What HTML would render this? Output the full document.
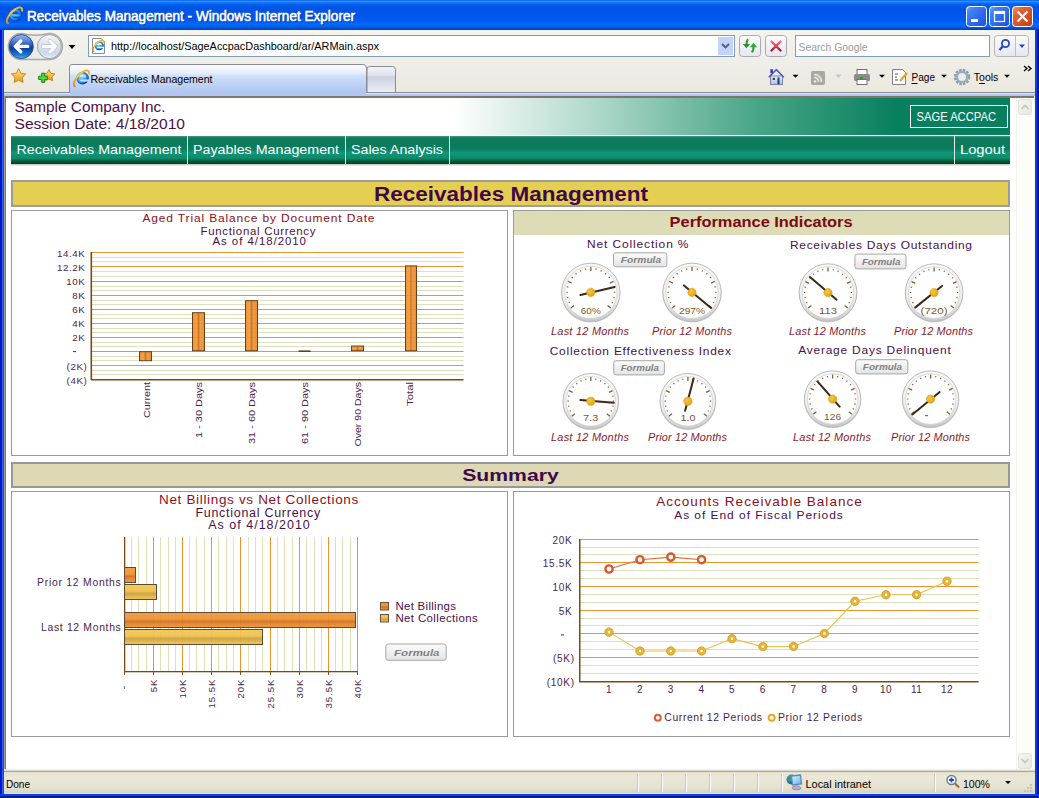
<!DOCTYPE html>
<html><head><meta charset="utf-8"><title>Receivables Management</title>
<style>
html,body{margin:0;padding:0;width:1039px;height:798px;overflow:hidden;background:#0a3ed6;}
svg{display:block;font-family:"Liberation Sans", sans-serif;}
</style></head><body>
<svg width="1039" height="798" viewBox="0 0 1039 798">
<defs>
<linearGradient id="gTitle" x1="0" y1="0" x2="0" y2="1">
 <stop offset="0" stop-color="#0058ee"/><stop offset="0.04" stop-color="#3593ff"/>
 <stop offset="0.08" stop-color="#127dff"/><stop offset="0.14" stop-color="#0262ee"/>
 <stop offset="0.24" stop-color="#0054e3"/><stop offset="0.56" stop-color="#0055eb"/>
 <stop offset="0.70" stop-color="#005bf5"/><stop offset="0.80" stop-color="#026afe"/>
 <stop offset="0.88" stop-color="#0062ef"/><stop offset="0.94" stop-color="#0052d6"/>
 <stop offset="1" stop-color="#0040ab"/>
</linearGradient>
<linearGradient id="gSideL" x1="0" y1="0" x2="1" y2="0">
 <stop offset="0" stop-color="#0030c8"/><stop offset="0.5" stop-color="#0a50e0"/><stop offset="1" stop-color="#1a66f0"/>
</linearGradient>
<linearGradient id="gSideR" x1="0" y1="0" x2="1" y2="0">
 <stop offset="0" stop-color="#1a60ee"/><stop offset="0.5" stop-color="#0446d8"/><stop offset="1" stop-color="#0026b0"/>
</linearGradient>
<linearGradient id="gTool" x1="0" y1="0" x2="0" y2="1">
 <stop offset="0" stop-color="#f4f3ee"/><stop offset="0.5" stop-color="#efeee8"/><stop offset="1" stop-color="#ebe9de"/>
</linearGradient>
<linearGradient id="gStatus" x1="0" y1="0" x2="0" y2="1">
 <stop offset="0" stop-color="#e4e1d0"/><stop offset="0.2" stop-color="#ebe8d8"/><stop offset="0.7" stop-color="#e6e2d0"/><stop offset="0.93" stop-color="#dcd5c2"/><stop offset="1" stop-color="#e8e7d8"/>
</linearGradient>

<radialGradient id="gIE" cx="0.45" cy="0.45" r="0.42">
 <stop offset="0" stop-color="#6ad0ff"/><stop offset="0.6" stop-color="#36a8f0"/><stop offset="0.85" stop-color="#1a78d8"/><stop offset="1" stop-color="#0c3a98"/>
</radialGradient>
<linearGradient id="gRing" x1="0" y1="0" x2="1" y2="0">
 <stop offset="0" stop-color="#e88a10"/><stop offset="0.5" stop-color="#ffd040"/><stop offset="1" stop-color="#f0b020"/>
</linearGradient>
<mask id="mIE" maskContentUnits="userSpaceOnUse">
 <rect x="-20" y="-20" width="40" height="40" fill="black"/>
 <circle cx="0" cy="0" r="6.3" fill="white"/>
 <path d="M-3.3 -0.9 Q-2.8 -3.9 0.2 -3.9 Q3.2 -3.9 3.7 -0.9 Z" fill="black"/>
 <path d="M-3.7 1.4 L8 1.4 L8 3.2 Q4 3.4 0.6 3.6 Q-2.6 3.6 -3.7 1.4 Z" fill="black"/>
</mask>

<linearGradient id="gBtnBlue" x1="0" y1="0" x2="1" y2="1">
 <stop offset="0" stop-color="#7aa8fc"/><stop offset="0.25" stop-color="#3c7ef8"/><stop offset="1" stop-color="#1a4fd8"/>
</linearGradient>
<linearGradient id="gBtnRed" x1="0" y1="0" x2="1" y2="1">
 <stop offset="0" stop-color="#f0a080"/><stop offset="0.25" stop-color="#e4643c"/><stop offset="1" stop-color="#c23c10"/>
</linearGradient>

<linearGradient id="gBack" x1="0" y1="0" x2="0" y2="1">
 <stop offset="0" stop-color="#8fb4ee"/><stop offset="0.45" stop-color="#2f67c8"/><stop offset="1" stop-color="#1c4aa8"/>
</linearGradient>
<linearGradient id="gFwd" x1="0" y1="0" x2="0" y2="1">
 <stop offset="0" stop-color="#f4f6fa"/><stop offset="0.5" stop-color="#d6dfee"/><stop offset="1" stop-color="#b8cae6"/>
</linearGradient>
<linearGradient id="gNavHolder" x1="0" y1="0" x2="0" y2="1">
 <stop offset="0" stop-color="#e4e4e0"/><stop offset="1" stop-color="#f2f2ee"/>
</linearGradient>
<linearGradient id="gSmallBtn" x1="0" y1="0" x2="0" y2="1">
 <stop offset="0" stop-color="#fbfbf8"/><stop offset="1" stop-color="#e2e1da"/>
</linearGradient>

<linearGradient id="gBack2" x1="0" y1="0" x2="0" y2="1">
 <stop offset="0" stop-color="#9cbcf0"/><stop offset="0.3" stop-color="#4a7ad0"/><stop offset="0.55" stop-color="#0c3c9c"/><stop offset="0.85" stop-color="#1a78d8"/><stop offset="1" stop-color="#5ab8f0"/>
</linearGradient>
<linearGradient id="gFwd2" x1="0" y1="0" x2="0" y2="1">
 <stop offset="0" stop-color="#f8f8fa"/><stop offset="0.5" stop-color="#d8dde8"/><stop offset="0.8" stop-color="#c8dcf0"/><stop offset="1" stop-color="#e8f4fc"/>
</linearGradient>

<linearGradient id="gTBtn" x1="0" y1="0" x2="0" y2="1">
 <stop offset="0" stop-color="#fbfbfd"/><stop offset="1" stop-color="#e6e6f0"/>
</linearGradient>
<linearGradient id="gStopX" x1="0" y1="40" x2="0" y2="52" gradientUnits="userSpaceOnUse">
 <stop offset="0" stop-color="#f27888"/><stop offset="0.5" stop-color="#e04058"/><stop offset="1" stop-color="#8a1020"/>
</linearGradient>

<linearGradient id="gStar" x1="0" y1="0" x2="0" y2="1">
 <stop offset="0" stop-color="#fde48a"/><stop offset="1" stop-color="#e89a10"/>
</linearGradient>
<linearGradient id="gTab" x1="0" y1="0" x2="0" y2="1">
 <stop offset="0" stop-color="#fdfdfe"/><stop offset="0.3" stop-color="#e6eefb"/><stop offset="0.4" stop-color="#cfdff8"/><stop offset="1" stop-color="#aec6f4"/>
</linearGradient>
<linearGradient id="gNewTab" x1="0" y1="0" x2="0" y2="1">
 <stop offset="0" stop-color="#f4f5fa"/><stop offset="0.35" stop-color="#e0e2ee"/><stop offset="0.4" stop-color="#ccd0e0"/><stop offset="1" stop-color="#eceef6"/>
</linearGradient>

<linearGradient id="gHouse" x1="0" y1="0" x2="0" y2="1">
 <stop offset="0" stop-color="#f4f6fa"/><stop offset="1" stop-color="#b4bccc"/>
</linearGradient>

<linearGradient id="gScrollBtn" x1="0" y1="0" x2="1" y2="1">
 <stop offset="0" stop-color="#f6f6f2"/><stop offset="1" stop-color="#e6e6e0"/>
</linearGradient>

<radialGradient id="gGlobe" cx="0.4" cy="0.35" r="0.7">
 <stop offset="0" stop-color="#7ad0f8"/><stop offset="0.5" stop-color="#2a7ad8"/><stop offset="1" stop-color="#1a4a9a"/>
</radialGradient>
<linearGradient id="gScreen" x1="0" y1="0" x2="1" y2="1">
 <stop offset="0" stop-color="#e0f4ff"/><stop offset="1" stop-color="#5ab0e8"/>
</linearGradient>

<linearGradient id="gHead" x1="0" y1="0" x2="1" y2="0">
 <stop offset="0" stop-color="#ffffff"/><stop offset="0.443" stop-color="#ffffff"/>
 <stop offset="0.60" stop-color="#a6d4c4"/><stop offset="0.75" stop-color="#46a486"/>
 <stop offset="0.885" stop-color="#08805e"/><stop offset="1" stop-color="#08805e"/>
</linearGradient>
<linearGradient id="gNav" x1="0" y1="0" x2="0" y2="1">
 <stop offset="0" stop-color="#4a9c86"/><stop offset="0.07" stop-color="#0e7a5a"/>
 <stop offset="0.45" stop-color="#0c7c5c"/><stop offset="0.6" stop-color="#12967a"/>
 <stop offset="0.8" stop-color="#0d8a68"/><stop offset="0.9" stop-color="#045a3c"/><stop offset="1" stop-color="#023e28"/>
</linearGradient>

<linearGradient id="gBarV" x1="0" y1="0" x2="1" y2="0">
 <stop offset="0" stop-color="#ee8c2c"/><stop offset="0.35" stop-color="#f39a3a"/>
 <stop offset="0.5" stop-color="#c86e1e"/><stop offset="0.65" stop-color="#f09636"/><stop offset="1" stop-color="#e5852a"/>
</linearGradient>
<linearGradient id="gBarB" x1="0" y1="0" x2="0" y2="1">
 <stop offset="0" stop-color="#f29a3a"/><stop offset="0.42" stop-color="#f09434"/>
 <stop offset="0.6" stop-color="#d07226"/><stop offset="0.78" stop-color="#e4862e"/><stop offset="1" stop-color="#f09434"/>
</linearGradient>
<linearGradient id="gBarC" x1="0" y1="0" x2="0" y2="1">
 <stop offset="0" stop-color="#f4c854"/><stop offset="0.42" stop-color="#f0c24c"/>
 <stop offset="0.62" stop-color="#c8a040"/><stop offset="0.8" stop-color="#e2b44a"/><stop offset="1" stop-color="#f0c24c"/>
</linearGradient>

<radialGradient id="gBezel" cx="0.5" cy="0.35" r="0.65">
 <stop offset="0" stop-color="#ffffff"/><stop offset="0.8" stop-color="#f4f4f4"/><stop offset="1" stop-color="#d4d4d4"/>
</radialGradient>
<linearGradient id="gBezelRing" x1="0" y1="0" x2="0" y2="1">
 <stop offset="0" stop-color="#f8f8f8"/><stop offset="0.6" stop-color="#eeeeee"/><stop offset="1" stop-color="#c8c8c8"/>
</linearGradient>
<linearGradient id="gFormula" x1="0" y1="0" x2="0" y2="1">
 <stop offset="0" stop-color="#fcfcfc"/><stop offset="1" stop-color="#e4e4e4"/>
</linearGradient>
<radialGradient id="gHub" cx="0.4" cy="0.4" r="0.6">
 <stop offset="0" stop-color="#f8c840"/><stop offset="1" stop-color="#e0a418"/>
</radialGradient>
</defs>
<rect x="0" y="0" width="1039" height="798" fill="#0a3ed6"/>
<rect x="0" y="0" width="1039" height="30" fill="url(#gTitle)"/>
<rect x="0" y="30" width="2" height="768" fill="#0214c8"/>
<rect x="2" y="30" width="1" height="768" fill="#2866f2"/>
<rect x="3" y="30" width="1" height="768" fill="#0a4ed8"/>
<rect x="1035" y="30" width="2" height="768" fill="#0442e4"/>
<rect x="1037" y="30" width="2" height="768" fill="#021888"/>
<rect x="0" y="794" width="1039" height="2" fill="#0442e4"/>
<rect x="0" y="796" width="1039" height="2" fill="#021a8c"/>
<rect x="4" y="30" width="1031" height="62" fill="url(#gTool)"/>
<rect x="4" y="92" width="1031" height="1" fill="#868b93"/>
<rect x="4" y="93" width="1031" height="1" fill="#dfe6f8"/>
<rect x="4" y="94" width="1031" height="2" fill="#b3c6f0"/>
<rect x="4" y="96" width="1031" height="2" fill="#7c776a"/>
<rect x="4" y="98" width="1031" height="673" fill="#ffffff"/>
<rect x="4" y="96" width="1" height="675" fill="#aaa494"/>
<rect x="5" y="96" width="1" height="674" fill="#7a7268"/>
<rect x="1034" y="96" width="1" height="675" fill="#f4f2ea"/>
<rect x="4" y="769" width="1031" height="1" fill="#f1f0e9"/>
<rect x="4" y="770" width="1031" height="1" fill="#dedcd0"/>
<rect x="4" y="771" width="1031" height="1" fill="#aaa796"/>
<rect x="4" y="772" width="1031" height="22" fill="url(#gStatus)"/>
<g transform="translate(14.5,15.5) scale(1.0)"><g transform="translate(1,-0.4)"><rect x="-8" y="-8" width="16" height="16" fill="url(#gIE)" mask="url(#mIE)"/></g><path d="M-10.10 0.60 L-10.19 0.19 L-10.19 -0.23 L-10.09 -0.64 L-9.90 -1.04 L-9.61 -1.44 L-9.24 -1.82 L-8.79 -2.18 L-8.25 -2.53 L-7.64 -2.85 L-6.96 -3.14 L-6.21 -3.41 L-5.41 -3.65 L-4.55 -3.85 L-3.66 -4.01 L-2.73 -4.14 L-1.77 -4.23 L-0.80 -4.29 L0.18 -4.30 L1.15 -4.27 L2.12 -4.21 L3.07 -4.10 L3.99 -3.96 L4.87 -3.78 L5.70 -3.56 L6.49 -3.32 L7.21 -3.04 L7.87 -2.74 L8.46 -2.40 L8.96 -2.05 L9.39 -1.68 L9.73 -1.29 L9.98 -0.89 L10.13 -0.49 L10.20 -0.08 L10.17 0.34 L10.05 0.75 L9.83 1.15 L9.52 1.54 L9.13 1.92 L8.65 2.28" transform="rotate(-47)" fill="none" stroke="url(#gRing)" stroke-width="1.9" stroke-linecap="round"/></g>
<text x="28" y="22" font-size="13.8" fill="#0a246a" stroke="#0a246a" stroke-width="0.5" textLength="328" lengthAdjust="spacingAndGlyphs" opacity="0.55">Receivables Management - Windows Internet Explorer</text>
<text x="27" y="21.2" font-size="13.8" fill="#ffffff" stroke="#ffffff" stroke-width="0.55" textLength="328" lengthAdjust="spacingAndGlyphs">Receivables Management - Windows Internet Explorer</text>
<rect x="966.5" y="6.5" width="20" height="20" rx="3" fill="url(#gBtnBlue)" stroke="#ffffff" stroke-width="1"/>
<rect x="971" y="19" width="7" height="3" fill="#ffffff"/>
<rect x="989.5" y="6.5" width="20" height="20" rx="3" fill="url(#gBtnBlue)" stroke="#ffffff" stroke-width="1"/>
<rect x="994.5" y="11.5" width="10" height="10" fill="none" stroke="#ffffff" stroke-width="1.2"/>
<rect x="994" y="11" width="11" height="3" fill="#ffffff"/>
<rect x="1012.5" y="6.5" width="20" height="20" rx="3" fill="url(#gBtnRed)" stroke="#ffffff" stroke-width="1"/>
<path d="M1017.5 11.5 L1027.5 21.5 M1027.5 11.5 L1017.5 21.5" stroke="#ffffff" stroke-width="2.2"/>
<path d="M21.3 33.5 Q35.3 37 49.4 33.5 A13 13 0 0 1 49.4 59.5 L21.3 59.5 A13 13 0 0 1 21.3 33.5 Z" fill="#ebebe8" stroke="#a8a8a8" stroke-width="1.3"/>
<circle cx="21.3" cy="46.6" r="12" fill="url(#gBack2)" stroke="#23428a" stroke-width="0.9"/>
<path d="M27.8 46.4 L15.8 46.4 M20.8 41 L15.2 46.4 L20.8 51.8" fill="none" stroke="#ffffff" stroke-width="3.4" stroke-linecap="round" stroke-linejoin="round"/>
<circle cx="49.4" cy="46.6" r="12" fill="url(#gFwd2)" stroke="#9a9a9a" stroke-width="0.9"/>
<path d="M43 46.4 L55 46.4 M50 41 L55.6 46.4 L50 51.8" fill="none" stroke="#c0c4cc" stroke-width="4.4" stroke-linecap="round" stroke-linejoin="round"/>
<path d="M43 46.4 L55 46.4 M50 41 L55.6 46.4 L50 51.8" fill="none" stroke="#ffffff" stroke-width="3" stroke-linecap="round" stroke-linejoin="round"/>
<path d="M68.5 45 L75.5 45 L72 49 Z" fill="#000000"/>
<rect x="88.5" y="35.5" width="646" height="21" fill="#ffffff" stroke="#7f9db9" stroke-width="1"/>
<rect x="718" y="37" width="15" height="18" fill="#c3d3fa"/>
<path d="M722 44 L725.5 47.5 L729 44" fill="none" stroke="#4d6185" stroke-width="1.8"/>
<path d="M92.5 38.5 L101.5 38.5 L104.5 41.5 L104.5 53.5 L92.5 53.5 Z" fill="#ffffff" stroke="#8c8c8c" stroke-width="1"/>
<g transform="translate(98.5,46) scale(0.72)"><g transform="translate(1,-0.4)"><rect x="-8" y="-8" width="16" height="16" fill="url(#gIE)" mask="url(#mIE)"/></g><path d="M-10.10 0.60 L-10.19 0.19 L-10.19 -0.23 L-10.09 -0.64 L-9.90 -1.04 L-9.61 -1.44 L-9.24 -1.82 L-8.79 -2.18 L-8.25 -2.53 L-7.64 -2.85 L-6.96 -3.14 L-6.21 -3.41 L-5.41 -3.65 L-4.55 -3.85 L-3.66 -4.01 L-2.73 -4.14 L-1.77 -4.23 L-0.80 -4.29 L0.18 -4.30 L1.15 -4.27 L2.12 -4.21 L3.07 -4.10 L3.99 -3.96 L4.87 -3.78 L5.70 -3.56 L6.49 -3.32 L7.21 -3.04 L7.87 -2.74 L8.46 -2.40 L8.96 -2.05 L9.39 -1.68 L9.73 -1.29 L9.98 -0.89 L10.13 -0.49 L10.20 -0.08 L10.17 0.34 L10.05 0.75 L9.83 1.15 L9.52 1.54 L9.13 1.92 L8.65 2.28" transform="rotate(-47)" fill="none" stroke="url(#gRing)" stroke-width="1.9" stroke-linecap="round"/></g>
<text x="111" y="50" font-size="11.5" fill="#000000" font-weight="normal" font-style="normal" text-anchor="start" textLength="268" lengthAdjust="spacingAndGlyphs" >http://localhost/SageAccpacDashboard/ar/ARMain.aspx</text>
<rect x="739.5" y="35.5" width="21" height="21" rx="3" fill="url(#gTBtn)" stroke="#ababab" stroke-width="1"/>
<path d="M748.2 39.2 Q746.3 40.8 746.6 44.5" fill="none" stroke="#2f9a2f" stroke-width="2"/>
<polygon points="742.8,44 750.2,44 746.4,48.2" fill="#2a902a"/>
<path d="M751.6 52.2 Q753.7 50.6 753.5 46.8" fill="none" stroke="#2f9a2f" stroke-width="2"/>
<polygon points="749.8,47.2 757.2,47.2 753.5,42.8" fill="#36a836"/>
<rect x="765.5" y="35.5" width="21" height="21" rx="3" fill="url(#gTBtn)" stroke="#ababab" stroke-width="1"/>
<path d="M771.5 41.5 L780.5 50.5 M780.5 41.5 L771.5 50.5" stroke="url(#gStopX)" stroke-width="2.4" stroke-linecap="round"/>
<rect x="795.5" y="35.5" width="194" height="21" fill="#ffffff" stroke="#7f9db9" stroke-width="1"/>
<text x="798.5" y="50.5" font-size="11.5" fill="#9c9c9c" font-weight="normal" font-style="normal" text-anchor="start" textLength="69" lengthAdjust="spacingAndGlyphs" >Search Google</text>
<rect x="994.5" y="35.5" width="34" height="21" rx="3" fill="url(#gTBtn)" stroke="#b4b4b4" stroke-width="1"/>
<rect x="1015" y="36" width="1" height="20" fill="#c0c0c0"/>
<circle cx="1005.5" cy="43.5" r="3.6" fill="none" stroke="#1f48c8" stroke-width="1.8"/>
<path d="M1003 46 L999.5 50" stroke="#1f48c8" stroke-width="2.2"/>
<path d="M1019 44.5 L1025 44.5 L1022 48 Z" fill="#1f48c8"/>
<polygon points="18.60,68.70 20.83,73.23 25.83,73.95 22.21,77.47 23.07,82.45 18.60,80.10 14.13,82.45 14.99,77.47 11.37,73.95 16.37,73.23" fill="url(#gStar)" stroke="#b87a08" stroke-width="0.8"/>
<polygon points="49.00,69.60 50.82,73.29 54.90,73.88 51.95,76.76 52.64,80.82 49.00,78.90 45.36,80.82 46.05,76.76 43.10,73.88 47.18,73.29" fill="url(#gStar)" stroke="#b87a08" stroke-width="0.8"/>
<path d="M38.6 76.2 h3 v-3 h3 v3 h3 v3.2 h-3 v3 h-3 v-3 h-3 z" fill="#5ad048" stroke="#1a8a18" stroke-width="1"/>
<path d="M69.5 93 L69.5 67 Q69.5 64.5 72 64.5 L363 64.5 Q366.5 64.5 366.5 68 L366.5 93" fill="url(#gTab)" stroke="#8b8c90" stroke-width="1"/>
<rect x="70" y="91" width="296" height="3" fill="#b0c6f2"/>
<g transform="translate(81.5,78.5) scale(1.0)"><g transform="translate(1,-0.4)"><rect x="-8" y="-8" width="16" height="16" fill="url(#gIE)" mask="url(#mIE)"/></g><path d="M-10.10 0.60 L-10.19 0.19 L-10.19 -0.23 L-10.09 -0.64 L-9.90 -1.04 L-9.61 -1.44 L-9.24 -1.82 L-8.79 -2.18 L-8.25 -2.53 L-7.64 -2.85 L-6.96 -3.14 L-6.21 -3.41 L-5.41 -3.65 L-4.55 -3.85 L-3.66 -4.01 L-2.73 -4.14 L-1.77 -4.23 L-0.80 -4.29 L0.18 -4.30 L1.15 -4.27 L2.12 -4.21 L3.07 -4.10 L3.99 -3.96 L4.87 -3.78 L5.70 -3.56 L6.49 -3.32 L7.21 -3.04 L7.87 -2.74 L8.46 -2.40 L8.96 -2.05 L9.39 -1.68 L9.73 -1.29 L9.98 -0.89 L10.13 -0.49 L10.20 -0.08 L10.17 0.34 L10.05 0.75 L9.83 1.15 L9.52 1.54 L9.13 1.92 L8.65 2.28" transform="rotate(-47)" fill="none" stroke="url(#gRing)" stroke-width="1.9" stroke-linecap="round"/></g>
<text x="90.5" y="83" font-size="11.5" fill="#000000" font-weight="normal" font-style="normal" text-anchor="start" textLength="122" lengthAdjust="spacingAndGlyphs" >Receivables Management</text>
<path d="M367 92 L367 69 Q367 66.5 369.5 66.5 L392.5 66.5 Q395.5 66.5 395.5 69.5 L395.5 92" fill="url(#gNewTab)" stroke="#8b8c90" stroke-width="1"/>
<rect x="770.3" y="69.2" width="2.6" height="4" fill="#2a3cc0"/>
<rect x="770.5" y="76" width="12" height="8.5" fill="url(#gHouse)" stroke="#7a86a4" stroke-width="1"/>
<path d="M768.8 77.2 L776.3 69.6 L783.8 77.2" fill="none" stroke="#4a58c0" stroke-width="1.5" stroke-linejoin="round"/>
<rect x="772.6" y="77.8" width="2.4" height="2.2" fill="#3a4468"/>
<rect x="777.4" y="77.4" width="2.2" height="6.8" fill="#1a46b4"/>
<path d="M792.5 74.8 L798.5 74.8 L795.5 77.8 Z" fill="#000"/>
<rect x="811" y="71" width="14" height="14" rx="2" fill="#a8a8a0"/>
<path d="M814 74.5 a7 7 0 0 1 7.5 7.5 M814 77.5 a4 4 0 0 1 4.5 4.5" fill="none" stroke="#e8e8e0" stroke-width="1.6"/>
<circle cx="815" cy="81.5" r="1.3" fill="#e8e8e0"/>
<path d="M835.5 74.8 L841.5 74.8 L838.5 77.8 Z" fill="#c4c4bc"/>
<rect x="857" y="69.5" width="10" height="5" fill="#ffffff" stroke="#707070" stroke-width="1"/>
<rect x="854" y="74" width="16" height="7" rx="1.5" fill="#8c8c8c"/>
<rect x="857" y="79.5" width="10" height="5" fill="#ffffff" stroke="#707070" stroke-width="1"/>
<rect x="860" y="77" width="3" height="2" fill="#20a020"/>
<path d="M879 74.8 L885 74.8 L882 77.8 Z" fill="#000"/>
<path d="M892.5 69.5 L902.5 69.5 L905.5 72.5 L905.5 84.5 L892.5 84.5 Z" fill="#ffffff" stroke="#808080" stroke-width="1"/>
<path d="M895 74 h3 M895 77 h2 M895 80 h3" stroke="#3050a0" stroke-width="1"/>
<path d="M900 81 L907 73" stroke="#e0a020" stroke-width="2"/>
<text x="911.5" y="81" font-size="11.5" fill="#000000" font-weight="normal" font-style="normal" text-anchor="start" textLength="23.5" lengthAdjust="spacingAndGlyphs" >Page</text>
<rect x="911.5" y="83" width="6" height="1" fill="#000"/>
<path d="M941 74.8 L947 74.8 L944 77.8 Z" fill="#000"/>
<circle cx="962" cy="77" r="6.5" fill="none" stroke="#8a9aaa" stroke-width="3.5" stroke-dasharray="2.2 1.2"/>
<circle cx="962" cy="77" r="5.2" fill="none" stroke="#9aabbc" stroke-width="2.5"/>
<circle cx="962" cy="77" r="2.6" fill="#e8edf2"/>
<text x="973.8" y="81" font-size="11.5" fill="#000000" font-weight="normal" font-style="normal" text-anchor="start" textLength="24.5" lengthAdjust="spacingAndGlyphs" >Tools</text>
<rect x="979" y="83" width="6" height="1" fill="#000"/>
<path d="M1004 74.8 L1010 74.8 L1007 77.8 Z" fill="#000"/>
<path d="M1024 66 L1027 68.5 L1024 71 M1028 66 L1031 68.5 L1028 71" fill="none" stroke="#000" stroke-width="1.3"/>
<rect x="1016" y="98" width="18" height="671" fill="#fcfcf8"/>
<rect x="1016" y="98" width="1" height="671" fill="#f4f3ec"/>
<rect x="1018.5" y="99.5" width="13" height="15" rx="2" fill="url(#gScrollBtn)" stroke="#e2e2da" stroke-width="1"/>
<path d="M1021.5 109 L1025 105.5 L1028.5 109" fill="none" stroke="#c4c4bc" stroke-width="1.6"/>
<rect x="1018.5" y="753.5" width="13" height="15" rx="2" fill="url(#gScrollBtn)" stroke="#e2e2da" stroke-width="1"/>
<path d="M1021.5 759 L1025 762.5 L1028.5 759" fill="none" stroke="#c4c4bc" stroke-width="1.6"/>
<text x="6" y="788" font-size="11.5" fill="#000000" font-weight="normal" font-style="normal" text-anchor="start" textLength="24" lengthAdjust="spacingAndGlyphs" >Done</text>
<rect x="637" y="773" width="1" height="19" fill="#cac7b6"/>
<rect x="638" y="773" width="1" height="19" fill="#ffffff"/>
<rect x="661" y="773" width="1" height="19" fill="#cac7b6"/>
<rect x="662" y="773" width="1" height="19" fill="#ffffff"/>
<rect x="685" y="773" width="1" height="19" fill="#cac7b6"/>
<rect x="686" y="773" width="1" height="19" fill="#ffffff"/>
<rect x="709" y="773" width="1" height="19" fill="#cac7b6"/>
<rect x="710" y="773" width="1" height="19" fill="#ffffff"/>
<rect x="733" y="773" width="1" height="19" fill="#cac7b6"/>
<rect x="734" y="773" width="1" height="19" fill="#ffffff"/>
<rect x="757" y="773" width="1" height="19" fill="#cac7b6"/>
<rect x="758" y="773" width="1" height="19" fill="#ffffff"/>
<rect x="781" y="773" width="1" height="19" fill="#cac7b6"/>
<rect x="782" y="773" width="1" height="19" fill="#ffffff"/>
<rect x="934" y="773" width="1" height="19" fill="#cac7b6"/>
<rect x="935" y="773" width="1" height="19" fill="#ffffff"/>
<circle cx="791.5" cy="779.5" r="5" fill="url(#gGlobe)"/>
<path d="M787.5 778 q2 -3 4 -1 q1 2 -1 3 q-2 2 -3 1z" fill="#3aa040"/>
<path d="M791.5 776 L800.5 775 L801.5 784 L792.5 785 Z" fill="url(#gScreen)" stroke="#5a8ab8" stroke-width="1.3"/>
<ellipse cx="796.5" cy="788" rx="4.5" ry="1.8" fill="#b8b0d0" stroke="#8a80a8" stroke-width="0.8"/>
<rect x="795" y="785" width="3" height="2" fill="#a8a0c0"/>
<text x="805.5" y="788" font-size="11.5" fill="#000000" font-weight="normal" font-style="normal" text-anchor="start" textLength="65.5" lengthAdjust="spacingAndGlyphs" >Local intranet</text>
<circle cx="951.5" cy="780" r="4.5" fill="#ffffff" stroke="#6a7a90" stroke-width="1.4"/>
<path d="M949 780 h5 M951.5 777.5 v5" stroke="#1a50c8" stroke-width="1.8"/>
<path d="M955 783.5 L959 787.5" stroke="#9a6a30" stroke-width="2"/>
<text x="963" y="788" font-size="11.5" fill="#000000" font-weight="normal" font-style="normal" text-anchor="start" textLength="27" lengthAdjust="spacingAndGlyphs" >100%</text>
<path d="M1005 781 L1011 781 L1008 784 Z" fill="#000"/>
<rect x="1030" y="784" width="2" height="2" fill="#c8c4b0"/>
<rect x="1030" y="787" width="2" height="2" fill="#c8c4b0"/>
<rect x="1030" y="790" width="2" height="2" fill="#c8c4b0"/>
<rect x="1027" y="787" width="2" height="2" fill="#c8c4b0"/>
<rect x="1027" y="790" width="2" height="2" fill="#c8c4b0"/>
<rect x="1024" y="790" width="2" height="2" fill="#c8c4b0"/>
<rect x="11" y="98" width="999" height="37" fill="url(#gHead)"/>
<text x="14.5" y="112" font-size="14" fill="#4a0f4a" font-weight="normal" font-style="normal" text-anchor="start" textLength="151" lengthAdjust="spacingAndGlyphs" >Sample Company Inc.</text>
<text x="14.5" y="128.5" font-size="14" fill="#4a0f4a" font-weight="normal" font-style="normal" text-anchor="start" textLength="170.5" lengthAdjust="spacingAndGlyphs" >Session Date: 4/18/2010</text>
<rect x="910.5" y="105.5" width="97" height="22" fill="none" stroke="#ffffff" stroke-width="1"/>
<text x="916.5" y="120.7" font-size="12" fill="#ffffff" font-weight="normal" font-style="normal" text-anchor="start" textLength="79.5" lengthAdjust="spacingAndGlyphs" >SAGE ACCPAC</text>
<rect x="11" y="136" width="999" height="28" fill="url(#gNav)"/>
<rect x="11" y="164" width="999" height="1" fill="#cfcac2"/>
<rect x="11" y="165" width="999" height="1" fill="#ebe8e4"/>
<rect x="187" y="136" width="1" height="28" fill="#dfe9e5"/>
<rect x="345" y="136" width="1" height="28" fill="#dfe9e5"/>
<rect x="449" y="136" width="1" height="28" fill="#dfe9e5"/>
<rect x="954" y="136" width="1" height="28" fill="#dfe9e5"/>
<text x="16.5" y="153.6" font-size="13" fill="#ffffff" font-weight="normal" font-style="normal" text-anchor="start" textLength="165" lengthAdjust="spacingAndGlyphs" >Receivables Management</text>
<text x="193" y="153.6" font-size="13" fill="#ffffff" font-weight="normal" font-style="normal" text-anchor="start" textLength="146" lengthAdjust="spacingAndGlyphs" >Payables Management</text>
<text x="351" y="153.6" font-size="13" fill="#ffffff" font-weight="normal" font-style="normal" text-anchor="start" textLength="92" lengthAdjust="spacingAndGlyphs" >Sales Analysis</text>
<text x="960" y="153.6" font-size="13" fill="#ffffff" font-weight="normal" font-style="normal" text-anchor="start" textLength="45" lengthAdjust="spacingAndGlyphs" >Logout</text>
<rect x="12" y="181" width="997" height="25" fill="#e5cf52" stroke="#a09d98" stroke-width="2"/>
<text x="374" y="201" font-size="19.5" fill="#40084a" font-weight="bold" font-style="normal" text-anchor="start" textLength="274" lengthAdjust="spacingAndGlyphs" >Receivables Management</text>
<rect x="11.5" y="210.5" width="496" height="245" fill="#ffffff" stroke="#9a9a9a" stroke-width="1"/>
<rect x="513.5" y="210.5" width="496" height="245" fill="#ffffff" stroke="#9a9a9a" stroke-width="1"/>
<rect x="514" y="211" width="495" height="24" fill="#dedcb6"/>
<text x="669.6" y="226.7" font-size="14" fill="#7a0a10" font-weight="bold" font-style="normal" text-anchor="start" textLength="183" lengthAdjust="spacingAndGlyphs" >Performance Indicators</text>
<rect x="12" y="463" width="997" height="24" fill="#dcd9b4" stroke="#9a9896" stroke-width="2"/>
<text x="462.2" y="481.3" font-size="17" fill="#40084a" font-weight="bold" font-style="normal" text-anchor="start" textLength="96.5" lengthAdjust="spacingAndGlyphs" >Summary</text>
<rect x="11.5" y="491.5" width="496" height="245" fill="#ffffff" stroke="#9a9a9a" stroke-width="1"/>
<rect x="513.5" y="491.5" width="496" height="245" fill="#ffffff" stroke="#9a9a9a" stroke-width="1"/>
<g transform="translate(142.5,0) scale(1.04,1)"><text x="0" y="221.7" font-size="11.5" fill="#8c1024" font-weight="normal" font-style="normal" text-anchor="start" textLength="223.08" lengthAdjust="spacing" >Aged Trial Balance by Document Date</text></g>
<g transform="translate(200.5,0) scale(1.04,1)"><text x="0" y="235" font-size="11" fill="#4a0f4a" font-weight="normal" font-style="normal" text-anchor="start" textLength="110.58" lengthAdjust="spacing" >Functional Currency</text></g>
<g transform="translate(212.5,0) scale(1.04,1)"><text x="0" y="245.5" font-size="11" fill="#4a0f4a" font-weight="normal" font-style="normal" text-anchor="start" textLength="89.90" lengthAdjust="spacing" >As of 4/18/2010</text></g>
<rect x="91" y="257" width="372.5" height="1" fill="#dde0bc"/>
<rect x="91" y="261" width="372.5" height="1" fill="#dde0bc"/>
<rect x="91" y="271" width="372.5" height="1" fill="#dde0bc"/>
<rect x="91" y="276" width="372.5" height="1" fill="#dde0bc"/>
<rect x="91" y="286" width="372.5" height="1" fill="#dde0bc"/>
<rect x="91" y="290" width="372.5" height="1" fill="#dde0bc"/>
<rect x="91" y="300" width="372.5" height="1" fill="#dde0bc"/>
<rect x="91" y="304" width="372.5" height="1" fill="#dde0bc"/>
<rect x="91" y="314" width="372.5" height="1" fill="#dde0bc"/>
<rect x="91" y="318" width="372.5" height="1" fill="#dde0bc"/>
<rect x="91" y="328" width="372.5" height="1" fill="#dde0bc"/>
<rect x="91" y="332" width="372.5" height="1" fill="#dde0bc"/>
<rect x="91" y="342" width="372.5" height="1" fill="#dde0bc"/>
<rect x="91" y="346" width="372.5" height="1" fill="#dde0bc"/>
<rect x="91" y="356" width="372.5" height="1" fill="#dde0bc"/>
<rect x="91" y="360" width="372.5" height="1" fill="#dde0bc"/>
<rect x="91" y="370" width="372.5" height="1" fill="#dde0bc"/>
<rect x="91" y="374" width="372.5" height="1" fill="#dde0bc"/>
<rect x="91" y="252" width="372.5" height="1" fill="#eb9530"/>
<rect x="91" y="266" width="372.5" height="1" fill="#eb9530"/>
<rect x="91" y="281" width="372.5" height="1" fill="#eb9530"/>
<rect x="91" y="295" width="372.5" height="1" fill="#eb9530"/>
<rect x="91" y="309" width="372.5" height="1" fill="#eb9530"/>
<rect x="91" y="323" width="372.5" height="1" fill="#eb9530"/>
<rect x="91" y="337" width="372.5" height="1" fill="#eb9530"/>
<rect x="91" y="351" width="372.5" height="1" fill="#eb9530"/>
<rect x="91" y="365" width="372.5" height="1" fill="#eb9530"/>
<rect x="91" y="379" width="372.5" height="1.5" fill="#7a4a14"/>
<rect x="90.5" y="252" width="1.6" height="128" fill="#7a4a14"/>
<text x="85.5" y="256.6" font-size="9.8" fill="#4c1e4c" text-anchor="end" letter-spacing="0.6">14.4K</text>
<text x="85.5" y="270.7" font-size="9.8" fill="#4c1e4c" text-anchor="end" letter-spacing="0.6">12.2K</text>
<text x="85.5" y="284.8" font-size="9.8" fill="#4c1e4c" text-anchor="end" letter-spacing="0.6">10K</text>
<text x="85.5" y="298.9" font-size="9.8" fill="#4c1e4c" text-anchor="end" letter-spacing="0.6">8K</text>
<text x="85.5" y="313.0" font-size="9.8" fill="#4c1e4c" text-anchor="end" letter-spacing="0.6">6K</text>
<text x="85.5" y="327.2" font-size="9.8" fill="#4c1e4c" text-anchor="end" letter-spacing="0.6">4K</text>
<text x="85.5" y="341.3" font-size="9.8" fill="#4c1e4c" text-anchor="end" letter-spacing="0.6">2K</text>
<rect x="73" y="351.1" width="3" height="1" fill="#4c1e4c"/>
<text x="87.5" y="369.5" font-size="9.8" fill="#4c1e4c" text-anchor="end" letter-spacing="0.6">(2K)</text>
<text x="87.5" y="383.6" font-size="9.8" fill="#4c1e4c" text-anchor="end" letter-spacing="0.6">(4K)</text>
<rect x="139.5" y="351.7" width="12" height="9.0" fill="url(#gBarV)" stroke="#6a4018" stroke-width="1" fill-opacity="0.93"/>
<rect x="192.5" y="312.7" width="12" height="38.0" fill="url(#gBarV)" stroke="#6a4018" stroke-width="1" fill-opacity="0.93"/>
<rect x="245.5" y="300.7" width="12" height="50.0" fill="url(#gBarV)" stroke="#6a4018" stroke-width="1" fill-opacity="0.93"/>
<rect x="299.1" y="350.9" width="11.0" height="0.6" fill="url(#gBarV)" stroke="#6a4018" stroke-width="1" fill-opacity="0.93"/>
<rect x="351.5" y="346.0" width="12" height="4.699999999999989" fill="url(#gBarV)" stroke="#6a4018" stroke-width="1" fill-opacity="0.93"/>
<rect x="405.5" y="265.9" width="11" height="84.80000000000001" fill="url(#gBarV)" stroke="#6a4018" stroke-width="1" fill-opacity="0.93"/>
<text x="149.8" y="382" font-size="9.4" fill="#4c1e4c" text-anchor="end" transform="rotate(-90 149.8 382)" textLength="36" lengthAdjust="spacingAndGlyphs">Current</text>
<text x="202.1" y="382" font-size="9.4" fill="#4c1e4c" text-anchor="end" transform="rotate(-90 202.1 382)" textLength="56" lengthAdjust="spacingAndGlyphs">1 - 30 Days</text>
<text x="254.5" y="382" font-size="9.4" fill="#4c1e4c" text-anchor="end" transform="rotate(-90 254.5 382)" textLength="62" lengthAdjust="spacingAndGlyphs">31 - 60 Days</text>
<text x="307.5" y="382" font-size="9.4" fill="#4c1e4c" text-anchor="end" transform="rotate(-90 307.5 382)" textLength="62" lengthAdjust="spacingAndGlyphs">61 - 90 Days</text>
<text x="360.7" y="382" font-size="9.4" fill="#4c1e4c" text-anchor="end" transform="rotate(-90 360.7 382)" textLength="64.5" lengthAdjust="spacingAndGlyphs">Over 90 Days</text>
<text x="413.1" y="382" font-size="9.4" fill="#4c1e4c" text-anchor="end" transform="rotate(-90 413.1 382)" textLength="24" lengthAdjust="spacingAndGlyphs">Total</text>
<g transform="translate(587,0) scale(1.04,1)"><text x="0" y="248" font-size="11.5" fill="#4a0f4a" font-weight="normal" font-style="normal" text-anchor="start" textLength="97.60" lengthAdjust="spacing" >Net Collection %</text></g>
<g transform="translate(790,0) scale(1.04,1)"><text x="0" y="249" font-size="11.5" fill="#4a0f4a" font-weight="normal" font-style="normal" text-anchor="start" textLength="175.00" lengthAdjust="spacing" >Receivables Days Outstanding</text></g>
<g transform="translate(549.7,0) scale(1.04,1)"><text x="0" y="355.2" font-size="11.5" fill="#4a0f4a" font-weight="normal" font-style="normal" text-anchor="start" textLength="174.33" lengthAdjust="spacing" >Collection Effectiveness Index</text></g>
<g transform="translate(798.2,0) scale(1.04,1)"><text x="0" y="354" font-size="11.5" fill="#4a0f4a" font-weight="normal" font-style="normal" text-anchor="start" textLength="146.73" lengthAdjust="spacing" >Average Days Delinquent</text></g>
<rect x="613.5" y="252.8" width="53.39999999999998" height="14.0" rx="2.5" fill="url(#gFormula)" stroke="#a6a6a6" stroke-width="1"/>
<text x="641.0" y="263.4" font-size="8.4" font-weight="bold" font-style="italic" fill="#828282" text-anchor="middle" textLength="40.3" lengthAdjust="spacingAndGlyphs">Formula</text>
<rect x="854.9" y="254.1" width="51.10000000000002" height="14.799999999999983" rx="2.5" fill="url(#gFormula)" stroke="#a6a6a6" stroke-width="1"/>
<text x="881.2" y="265.1" font-size="8.4" font-weight="bold" font-style="italic" fill="#828282" text-anchor="middle" textLength="38.6" lengthAdjust="spacingAndGlyphs">Formula</text>
<rect x="613.7" y="360.7" width="50.69999999999993" height="14.199999999999989" rx="2.5" fill="url(#gFormula)" stroke="#a6a6a6" stroke-width="1"/>
<text x="639.8" y="371.4" font-size="8.4" font-weight="bold" font-style="italic" fill="#828282" text-anchor="middle" textLength="38.3" lengthAdjust="spacingAndGlyphs">Formula</text>
<rect x="855.7" y="359.7" width="52.09999999999991" height="14.199999999999989" rx="2.5" fill="url(#gFormula)" stroke="#a6a6a6" stroke-width="1"/>
<text x="882.5" y="370.4" font-size="8.4" font-weight="bold" font-style="italic" fill="#828282" text-anchor="middle" textLength="39.3" lengthAdjust="spacingAndGlyphs">Formula</text>
<circle cx="590.8" cy="293.0" r="29.599999999999998" fill="#d6d6d6"/>
<circle cx="590.8" cy="292.4" r="29.2" fill="url(#gBezelRing)" stroke="#b4b4b4" stroke-width="0.9"/>
<circle cx="590.8" cy="292.4" r="26.2" fill="#fefefe" stroke="#d2d2d2" stroke-width="0.8"/>
<line x1="574.00" y1="305.52" x2="570.78" y2="308.04" stroke="#8a5c28" stroke-width="1.3"/>
<line x1="569.93" y1="302.22" x2="568.61" y2="302.84" stroke="#8a5c28" stroke-width="1.1"/>
<line x1="568.27" y1="297.35" x2="566.84" y2="297.67" stroke="#8a5c28" stroke-width="1.1"/>
<line x1="567.73" y1="292.24" x2="566.27" y2="292.23" stroke="#8a5c28" stroke-width="1.1"/>
<line x1="568.34" y1="287.13" x2="566.92" y2="286.80" stroke="#8a5c28" stroke-width="1.1"/>
<line x1="571.64" y1="283.06" x2="567.97" y2="281.26" stroke="#8a5c28" stroke-width="1.3"/>
<line x1="572.82" y1="277.95" x2="571.68" y2="277.03" stroke="#8a5c28" stroke-width="1.1"/>
<line x1="576.47" y1="274.32" x2="575.56" y2="273.18" stroke="#8a5c28" stroke-width="1.1"/>
<line x1="580.83" y1="271.60" x2="580.20" y2="270.28" stroke="#8a5c28" stroke-width="1.1"/>
<line x1="585.69" y1="269.91" x2="585.37" y2="268.48" stroke="#8a5c28" stroke-width="1.1"/>
<line x1="590.80" y1="271.08" x2="590.80" y2="267.00" stroke="#8a5c28" stroke-width="1.3"/>
<line x1="595.91" y1="269.91" x2="596.23" y2="268.48" stroke="#8a5c28" stroke-width="1.1"/>
<line x1="600.77" y1="271.60" x2="601.40" y2="270.28" stroke="#8a5c28" stroke-width="1.1"/>
<line x1="605.13" y1="274.32" x2="606.04" y2="273.18" stroke="#8a5c28" stroke-width="1.1"/>
<line x1="608.78" y1="277.95" x2="609.92" y2="277.03" stroke="#8a5c28" stroke-width="1.1"/>
<line x1="609.96" y1="283.06" x2="613.63" y2="281.26" stroke="#8a5c28" stroke-width="1.3"/>
<line x1="613.26" y1="287.13" x2="614.68" y2="286.80" stroke="#8a5c28" stroke-width="1.1"/>
<line x1="613.87" y1="292.24" x2="615.33" y2="292.23" stroke="#8a5c28" stroke-width="1.1"/>
<line x1="613.33" y1="297.35" x2="614.76" y2="297.67" stroke="#8a5c28" stroke-width="1.1"/>
<line x1="611.67" y1="302.22" x2="612.99" y2="302.84" stroke="#8a5c28" stroke-width="1.1"/>
<line x1="607.60" y1="305.52" x2="610.82" y2="308.04" stroke="#8a5c28" stroke-width="1.3"/>
<text x="590.8" y="313.7" font-size="9.5" fill="#7c5a30" text-anchor="middle" textLength="20" lengthAdjust="spacingAndGlyphs">60%</text>
<line x1="580.4" y1="295" x2="614.7" y2="287" stroke="#3c2814" stroke-width="2" stroke-linecap="round"/>
<circle cx="590.8" cy="292.4" r="4.2" fill="url(#gHub)" stroke="#d89a18" stroke-width="0.5"/>
<circle cx="692" cy="293.0" r="29.599999999999998" fill="#d6d6d6"/>
<circle cx="692" cy="292.4" r="29.2" fill="url(#gBezelRing)" stroke="#b4b4b4" stroke-width="0.9"/>
<circle cx="692" cy="292.4" r="26.2" fill="#fefefe" stroke="#d2d2d2" stroke-width="0.8"/>
<line x1="675.20" y1="305.52" x2="671.98" y2="308.04" stroke="#8a5c28" stroke-width="1.3"/>
<line x1="671.13" y1="302.22" x2="669.81" y2="302.84" stroke="#8a5c28" stroke-width="1.1"/>
<line x1="669.47" y1="297.35" x2="668.04" y2="297.67" stroke="#8a5c28" stroke-width="1.1"/>
<line x1="668.93" y1="292.24" x2="667.47" y2="292.23" stroke="#8a5c28" stroke-width="1.1"/>
<line x1="669.54" y1="287.13" x2="668.12" y2="286.80" stroke="#8a5c28" stroke-width="1.1"/>
<line x1="672.84" y1="283.06" x2="669.17" y2="281.26" stroke="#8a5c28" stroke-width="1.3"/>
<line x1="674.02" y1="277.95" x2="672.88" y2="277.03" stroke="#8a5c28" stroke-width="1.1"/>
<line x1="677.67" y1="274.32" x2="676.76" y2="273.18" stroke="#8a5c28" stroke-width="1.1"/>
<line x1="682.03" y1="271.60" x2="681.40" y2="270.28" stroke="#8a5c28" stroke-width="1.1"/>
<line x1="686.89" y1="269.91" x2="686.57" y2="268.48" stroke="#8a5c28" stroke-width="1.1"/>
<line x1="692.00" y1="271.08" x2="692.00" y2="267.00" stroke="#8a5c28" stroke-width="1.3"/>
<line x1="697.11" y1="269.91" x2="697.43" y2="268.48" stroke="#8a5c28" stroke-width="1.1"/>
<line x1="701.97" y1="271.60" x2="702.60" y2="270.28" stroke="#8a5c28" stroke-width="1.1"/>
<line x1="706.33" y1="274.32" x2="707.24" y2="273.18" stroke="#8a5c28" stroke-width="1.1"/>
<line x1="709.98" y1="277.95" x2="711.12" y2="277.03" stroke="#8a5c28" stroke-width="1.1"/>
<line x1="711.16" y1="283.06" x2="714.83" y2="281.26" stroke="#8a5c28" stroke-width="1.3"/>
<line x1="714.46" y1="287.13" x2="715.88" y2="286.80" stroke="#8a5c28" stroke-width="1.1"/>
<line x1="715.07" y1="292.24" x2="716.53" y2="292.23" stroke="#8a5c28" stroke-width="1.1"/>
<line x1="714.53" y1="297.35" x2="715.96" y2="297.67" stroke="#8a5c28" stroke-width="1.1"/>
<line x1="712.87" y1="302.22" x2="714.19" y2="302.84" stroke="#8a5c28" stroke-width="1.1"/>
<line x1="708.80" y1="305.52" x2="712.02" y2="308.04" stroke="#8a5c28" stroke-width="1.3"/>
<text x="692" y="313.7" font-size="9.5" fill="#7c5a30" text-anchor="middle" textLength="26" lengthAdjust="spacingAndGlyphs">297%</text>
<line x1="684" y1="285.4" x2="711" y2="308" stroke="#3c2814" stroke-width="2" stroke-linecap="round"/>
<circle cx="692" cy="292.4" r="4.2" fill="url(#gHub)" stroke="#d89a18" stroke-width="0.5"/>
<circle cx="828" cy="293.20000000000005" r="29.2" fill="#d6d6d6"/>
<circle cx="828" cy="292.6" r="28.8" fill="url(#gBezelRing)" stroke="#b4b4b4" stroke-width="0.9"/>
<circle cx="828" cy="292.6" r="25.8" fill="#fefefe" stroke="#d2d2d2" stroke-width="0.8"/>
<line x1="811.43" y1="305.54" x2="808.26" y2="308.03" stroke="#8a5c28" stroke-width="1.3"/>
<line x1="807.41" y1="302.29" x2="806.11" y2="302.90" stroke="#8a5c28" stroke-width="1.1"/>
<line x1="805.78" y1="297.49" x2="804.37" y2="297.79" stroke="#8a5c28" stroke-width="1.1"/>
<line x1="805.25" y1="292.44" x2="803.81" y2="292.43" stroke="#8a5c28" stroke-width="1.1"/>
<line x1="805.85" y1="287.40" x2="804.45" y2="287.08" stroke="#8a5c28" stroke-width="1.1"/>
<line x1="809.10" y1="283.38" x2="805.48" y2="281.62" stroke="#8a5c28" stroke-width="1.3"/>
<line x1="810.27" y1="278.34" x2="809.15" y2="277.44" stroke="#8a5c28" stroke-width="1.1"/>
<line x1="813.87" y1="274.77" x2="812.97" y2="273.64" stroke="#8a5c28" stroke-width="1.1"/>
<line x1="818.17" y1="272.08" x2="817.55" y2="270.78" stroke="#8a5c28" stroke-width="1.1"/>
<line x1="822.96" y1="270.41" x2="822.64" y2="269.01" stroke="#8a5c28" stroke-width="1.1"/>
<line x1="828.00" y1="271.58" x2="828.00" y2="267.54" stroke="#8a5c28" stroke-width="1.3"/>
<line x1="833.04" y1="270.41" x2="833.36" y2="269.01" stroke="#8a5c28" stroke-width="1.1"/>
<line x1="837.83" y1="272.08" x2="838.45" y2="270.78" stroke="#8a5c28" stroke-width="1.1"/>
<line x1="842.13" y1="274.77" x2="843.03" y2="273.64" stroke="#8a5c28" stroke-width="1.1"/>
<line x1="845.73" y1="278.34" x2="846.85" y2="277.44" stroke="#8a5c28" stroke-width="1.1"/>
<line x1="846.90" y1="283.38" x2="850.52" y2="281.62" stroke="#8a5c28" stroke-width="1.3"/>
<line x1="850.15" y1="287.40" x2="851.55" y2="287.08" stroke="#8a5c28" stroke-width="1.1"/>
<line x1="850.75" y1="292.44" x2="852.19" y2="292.43" stroke="#8a5c28" stroke-width="1.1"/>
<line x1="850.22" y1="297.49" x2="851.63" y2="297.79" stroke="#8a5c28" stroke-width="1.1"/>
<line x1="848.59" y1="302.29" x2="849.89" y2="302.90" stroke="#8a5c28" stroke-width="1.1"/>
<line x1="844.57" y1="305.54" x2="847.74" y2="308.03" stroke="#8a5c28" stroke-width="1.3"/>
<text x="828" y="313.8" font-size="9.5" fill="#7c5a30" text-anchor="middle" textLength="18" lengthAdjust="spacingAndGlyphs">113</text>
<line x1="836.6" y1="299.7" x2="810" y2="277" stroke="#3c2814" stroke-width="2" stroke-linecap="round"/>
<circle cx="828" cy="292.6" r="4.2" fill="url(#gHub)" stroke="#d89a18" stroke-width="0.5"/>
<circle cx="934.1" cy="293.20000000000005" r="29.2" fill="#d6d6d6"/>
<circle cx="934.1" cy="292.6" r="28.8" fill="url(#gBezelRing)" stroke="#b4b4b4" stroke-width="0.9"/>
<circle cx="934.1" cy="292.6" r="25.8" fill="#fefefe" stroke="#d2d2d2" stroke-width="0.8"/>
<line x1="917.53" y1="305.54" x2="914.36" y2="308.03" stroke="#8a5c28" stroke-width="1.3"/>
<line x1="913.51" y1="302.29" x2="912.21" y2="302.90" stroke="#8a5c28" stroke-width="1.1"/>
<line x1="911.88" y1="297.49" x2="910.47" y2="297.79" stroke="#8a5c28" stroke-width="1.1"/>
<line x1="911.35" y1="292.44" x2="909.91" y2="292.43" stroke="#8a5c28" stroke-width="1.1"/>
<line x1="911.95" y1="287.40" x2="910.55" y2="287.08" stroke="#8a5c28" stroke-width="1.1"/>
<line x1="915.20" y1="283.38" x2="911.58" y2="281.62" stroke="#8a5c28" stroke-width="1.3"/>
<line x1="916.37" y1="278.34" x2="915.25" y2="277.44" stroke="#8a5c28" stroke-width="1.1"/>
<line x1="919.97" y1="274.77" x2="919.07" y2="273.64" stroke="#8a5c28" stroke-width="1.1"/>
<line x1="924.27" y1="272.08" x2="923.65" y2="270.78" stroke="#8a5c28" stroke-width="1.1"/>
<line x1="929.06" y1="270.41" x2="928.74" y2="269.01" stroke="#8a5c28" stroke-width="1.1"/>
<line x1="934.10" y1="271.58" x2="934.10" y2="267.54" stroke="#8a5c28" stroke-width="1.3"/>
<line x1="939.14" y1="270.41" x2="939.46" y2="269.01" stroke="#8a5c28" stroke-width="1.1"/>
<line x1="943.93" y1="272.08" x2="944.55" y2="270.78" stroke="#8a5c28" stroke-width="1.1"/>
<line x1="948.23" y1="274.77" x2="949.13" y2="273.64" stroke="#8a5c28" stroke-width="1.1"/>
<line x1="951.83" y1="278.34" x2="952.95" y2="277.44" stroke="#8a5c28" stroke-width="1.1"/>
<line x1="953.00" y1="283.38" x2="956.62" y2="281.62" stroke="#8a5c28" stroke-width="1.3"/>
<line x1="956.25" y1="287.40" x2="957.65" y2="287.08" stroke="#8a5c28" stroke-width="1.1"/>
<line x1="956.85" y1="292.44" x2="958.29" y2="292.43" stroke="#8a5c28" stroke-width="1.1"/>
<line x1="956.32" y1="297.49" x2="957.73" y2="297.79" stroke="#8a5c28" stroke-width="1.1"/>
<line x1="954.69" y1="302.29" x2="955.99" y2="302.90" stroke="#8a5c28" stroke-width="1.1"/>
<line x1="950.67" y1="305.54" x2="953.84" y2="308.03" stroke="#8a5c28" stroke-width="1.3"/>
<text x="934.1" y="314" font-size="9.5" fill="#7c5a30" text-anchor="middle" textLength="27" lengthAdjust="spacingAndGlyphs">(720)</text>
<line x1="942" y1="286" x2="915.4" y2="307.4" stroke="#3c2814" stroke-width="2" stroke-linecap="round"/>
<circle cx="934.1" cy="292.6" r="4.2" fill="url(#gHub)" stroke="#d89a18" stroke-width="0.5"/>
<circle cx="590.8" cy="401.90000000000003" r="28.2" fill="#d6d6d6"/>
<circle cx="590.8" cy="401.3" r="27.8" fill="url(#gBezelRing)" stroke="#b4b4b4" stroke-width="0.9"/>
<circle cx="590.8" cy="401.3" r="24.8" fill="#fefefe" stroke="#d2d2d2" stroke-width="0.8"/>
<line x1="574.81" y1="413.79" x2="571.74" y2="416.19" stroke="#8a5c28" stroke-width="1.3"/>
<line x1="570.93" y1="410.65" x2="569.67" y2="411.24" stroke="#8a5c28" stroke-width="1.1"/>
<line x1="569.35" y1="406.02" x2="567.99" y2="406.31" stroke="#8a5c28" stroke-width="1.1"/>
<line x1="568.84" y1="401.15" x2="567.45" y2="401.14" stroke="#8a5c28" stroke-width="1.1"/>
<line x1="569.42" y1="396.28" x2="568.06" y2="395.97" stroke="#8a5c28" stroke-width="1.1"/>
<line x1="572.56" y1="392.40" x2="569.06" y2="390.70" stroke="#8a5c28" stroke-width="1.3"/>
<line x1="573.68" y1="387.54" x2="572.60" y2="386.67" stroke="#8a5c28" stroke-width="1.1"/>
<line x1="577.16" y1="384.09" x2="576.29" y2="383.00" stroke="#8a5c28" stroke-width="1.1"/>
<line x1="581.31" y1="381.49" x2="580.71" y2="380.24" stroke="#8a5c28" stroke-width="1.1"/>
<line x1="585.93" y1="379.88" x2="585.63" y2="378.53" stroke="#8a5c28" stroke-width="1.1"/>
<line x1="590.80" y1="381.01" x2="590.80" y2="377.11" stroke="#8a5c28" stroke-width="1.3"/>
<line x1="595.67" y1="379.88" x2="595.97" y2="378.53" stroke="#8a5c28" stroke-width="1.1"/>
<line x1="600.29" y1="381.49" x2="600.89" y2="380.24" stroke="#8a5c28" stroke-width="1.1"/>
<line x1="604.44" y1="384.09" x2="605.31" y2="383.00" stroke="#8a5c28" stroke-width="1.1"/>
<line x1="607.92" y1="387.54" x2="609.00" y2="386.67" stroke="#8a5c28" stroke-width="1.1"/>
<line x1="609.04" y1="392.40" x2="612.54" y2="390.70" stroke="#8a5c28" stroke-width="1.3"/>
<line x1="612.18" y1="396.28" x2="613.54" y2="395.97" stroke="#8a5c28" stroke-width="1.1"/>
<line x1="612.76" y1="401.15" x2="614.15" y2="401.14" stroke="#8a5c28" stroke-width="1.1"/>
<line x1="612.25" y1="406.02" x2="613.61" y2="406.31" stroke="#8a5c28" stroke-width="1.1"/>
<line x1="610.67" y1="410.65" x2="611.93" y2="411.24" stroke="#8a5c28" stroke-width="1.1"/>
<line x1="606.79" y1="413.79" x2="609.86" y2="416.19" stroke="#8a5c28" stroke-width="1.3"/>
<text x="590.8" y="420.8" font-size="9.5" fill="#7c5a30" text-anchor="middle" textLength="15" lengthAdjust="spacingAndGlyphs">7.3</text>
<line x1="580.4" y1="400" x2="613.8" y2="402.7" stroke="#3c2814" stroke-width="2" stroke-linecap="round"/>
<circle cx="590.8" cy="401.3" r="4.2" fill="url(#gHub)" stroke="#d89a18" stroke-width="0.5"/>
<circle cx="687.9" cy="401.90000000000003" r="28.2" fill="#d6d6d6"/>
<circle cx="687.9" cy="401.3" r="27.8" fill="url(#gBezelRing)" stroke="#b4b4b4" stroke-width="0.9"/>
<circle cx="687.9" cy="401.3" r="24.8" fill="#fefefe" stroke="#d2d2d2" stroke-width="0.8"/>
<line x1="671.91" y1="413.79" x2="668.84" y2="416.19" stroke="#8a5c28" stroke-width="1.3"/>
<line x1="668.03" y1="410.65" x2="666.77" y2="411.24" stroke="#8a5c28" stroke-width="1.1"/>
<line x1="666.45" y1="406.02" x2="665.09" y2="406.31" stroke="#8a5c28" stroke-width="1.1"/>
<line x1="665.94" y1="401.15" x2="664.55" y2="401.14" stroke="#8a5c28" stroke-width="1.1"/>
<line x1="666.52" y1="396.28" x2="665.16" y2="395.97" stroke="#8a5c28" stroke-width="1.1"/>
<line x1="669.66" y1="392.40" x2="666.16" y2="390.70" stroke="#8a5c28" stroke-width="1.3"/>
<line x1="670.78" y1="387.54" x2="669.70" y2="386.67" stroke="#8a5c28" stroke-width="1.1"/>
<line x1="674.26" y1="384.09" x2="673.39" y2="383.00" stroke="#8a5c28" stroke-width="1.1"/>
<line x1="678.41" y1="381.49" x2="677.81" y2="380.24" stroke="#8a5c28" stroke-width="1.1"/>
<line x1="683.03" y1="379.88" x2="682.73" y2="378.53" stroke="#8a5c28" stroke-width="1.1"/>
<line x1="687.90" y1="381.01" x2="687.90" y2="377.11" stroke="#8a5c28" stroke-width="1.3"/>
<line x1="692.77" y1="379.88" x2="693.07" y2="378.53" stroke="#8a5c28" stroke-width="1.1"/>
<line x1="697.39" y1="381.49" x2="697.99" y2="380.24" stroke="#8a5c28" stroke-width="1.1"/>
<line x1="701.54" y1="384.09" x2="702.41" y2="383.00" stroke="#8a5c28" stroke-width="1.1"/>
<line x1="705.02" y1="387.54" x2="706.10" y2="386.67" stroke="#8a5c28" stroke-width="1.1"/>
<line x1="706.14" y1="392.40" x2="709.64" y2="390.70" stroke="#8a5c28" stroke-width="1.3"/>
<line x1="709.28" y1="396.28" x2="710.64" y2="395.97" stroke="#8a5c28" stroke-width="1.1"/>
<line x1="709.86" y1="401.15" x2="711.25" y2="401.14" stroke="#8a5c28" stroke-width="1.1"/>
<line x1="709.35" y1="406.02" x2="710.71" y2="406.31" stroke="#8a5c28" stroke-width="1.1"/>
<line x1="707.77" y1="410.65" x2="709.03" y2="411.24" stroke="#8a5c28" stroke-width="1.1"/>
<line x1="703.89" y1="413.79" x2="706.96" y2="416.19" stroke="#8a5c28" stroke-width="1.3"/>
<text x="687.9" y="420.8" font-size="9.5" fill="#7c5a30" text-anchor="middle" textLength="15" lengthAdjust="spacingAndGlyphs">1.0</text>
<line x1="685.1" y1="410.7" x2="693.6" y2="378.4" stroke="#3c2814" stroke-width="2" stroke-linecap="round"/>
<circle cx="687.9" cy="401.3" r="4.2" fill="url(#gHub)" stroke="#d89a18" stroke-width="0.5"/>
<circle cx="832.6" cy="399.70000000000005" r="28.599999999999998" fill="#d6d6d6"/>
<circle cx="832.6" cy="399.1" r="28.2" fill="url(#gBezelRing)" stroke="#b4b4b4" stroke-width="0.9"/>
<circle cx="832.6" cy="399.1" r="25.2" fill="#fefefe" stroke="#d2d2d2" stroke-width="0.8"/>
<line x1="816.38" y1="411.77" x2="813.27" y2="414.20" stroke="#8a5c28" stroke-width="1.3"/>
<line x1="812.44" y1="408.59" x2="811.17" y2="409.19" stroke="#8a5c28" stroke-width="1.1"/>
<line x1="810.84" y1="403.88" x2="809.46" y2="404.19" stroke="#8a5c28" stroke-width="1.1"/>
<line x1="810.32" y1="398.94" x2="808.91" y2="398.93" stroke="#8a5c28" stroke-width="1.1"/>
<line x1="810.91" y1="394.01" x2="809.54" y2="393.69" stroke="#8a5c28" stroke-width="1.1"/>
<line x1="814.10" y1="390.08" x2="810.55" y2="388.35" stroke="#8a5c28" stroke-width="1.3"/>
<line x1="815.24" y1="385.14" x2="814.14" y2="384.26" stroke="#8a5c28" stroke-width="1.1"/>
<line x1="818.76" y1="381.64" x2="817.89" y2="380.54" stroke="#8a5c28" stroke-width="1.1"/>
<line x1="822.97" y1="379.01" x2="822.36" y2="377.74" stroke="#8a5c28" stroke-width="1.1"/>
<line x1="827.66" y1="377.38" x2="827.35" y2="376.00" stroke="#8a5c28" stroke-width="1.1"/>
<line x1="832.60" y1="378.51" x2="832.60" y2="374.57" stroke="#8a5c28" stroke-width="1.3"/>
<line x1="837.54" y1="377.38" x2="837.85" y2="376.00" stroke="#8a5c28" stroke-width="1.1"/>
<line x1="842.23" y1="379.01" x2="842.84" y2="377.74" stroke="#8a5c28" stroke-width="1.1"/>
<line x1="846.44" y1="381.64" x2="847.31" y2="380.54" stroke="#8a5c28" stroke-width="1.1"/>
<line x1="849.96" y1="385.14" x2="851.06" y2="384.26" stroke="#8a5c28" stroke-width="1.1"/>
<line x1="851.10" y1="390.08" x2="854.65" y2="388.35" stroke="#8a5c28" stroke-width="1.3"/>
<line x1="854.29" y1="394.01" x2="855.66" y2="393.69" stroke="#8a5c28" stroke-width="1.1"/>
<line x1="854.88" y1="398.94" x2="856.29" y2="398.93" stroke="#8a5c28" stroke-width="1.1"/>
<line x1="854.36" y1="403.88" x2="855.74" y2="404.19" stroke="#8a5c28" stroke-width="1.1"/>
<line x1="852.76" y1="408.59" x2="854.03" y2="409.19" stroke="#8a5c28" stroke-width="1.1"/>
<line x1="848.82" y1="411.77" x2="851.93" y2="414.20" stroke="#8a5c28" stroke-width="1.3"/>
<text x="832.6" y="419.8" font-size="9.5" fill="#7c5a30" text-anchor="middle" textLength="17" lengthAdjust="spacingAndGlyphs">126</text>
<line x1="839.6" y1="406.7" x2="817.4" y2="381.4" stroke="#3c2814" stroke-width="2" stroke-linecap="round"/>
<circle cx="832.6" cy="399.1" r="4.2" fill="url(#gHub)" stroke="#d89a18" stroke-width="0.5"/>
<circle cx="930.6" cy="399.70000000000005" r="28.599999999999998" fill="#d6d6d6"/>
<circle cx="930.6" cy="399.1" r="28.2" fill="url(#gBezelRing)" stroke="#b4b4b4" stroke-width="0.9"/>
<circle cx="930.6" cy="399.1" r="25.2" fill="#fefefe" stroke="#d2d2d2" stroke-width="0.8"/>
<line x1="914.38" y1="411.77" x2="911.27" y2="414.20" stroke="#8a5c28" stroke-width="1.3"/>
<line x1="910.44" y1="408.59" x2="909.17" y2="409.19" stroke="#8a5c28" stroke-width="1.1"/>
<line x1="908.84" y1="403.88" x2="907.46" y2="404.19" stroke="#8a5c28" stroke-width="1.1"/>
<line x1="908.32" y1="398.94" x2="906.91" y2="398.93" stroke="#8a5c28" stroke-width="1.1"/>
<line x1="908.91" y1="394.01" x2="907.54" y2="393.69" stroke="#8a5c28" stroke-width="1.1"/>
<line x1="912.10" y1="390.08" x2="908.55" y2="388.35" stroke="#8a5c28" stroke-width="1.3"/>
<line x1="913.24" y1="385.14" x2="912.14" y2="384.26" stroke="#8a5c28" stroke-width="1.1"/>
<line x1="916.76" y1="381.64" x2="915.89" y2="380.54" stroke="#8a5c28" stroke-width="1.1"/>
<line x1="920.97" y1="379.01" x2="920.36" y2="377.74" stroke="#8a5c28" stroke-width="1.1"/>
<line x1="925.66" y1="377.38" x2="925.35" y2="376.00" stroke="#8a5c28" stroke-width="1.1"/>
<line x1="930.60" y1="378.51" x2="930.60" y2="374.57" stroke="#8a5c28" stroke-width="1.3"/>
<line x1="935.54" y1="377.38" x2="935.85" y2="376.00" stroke="#8a5c28" stroke-width="1.1"/>
<line x1="940.23" y1="379.01" x2="940.84" y2="377.74" stroke="#8a5c28" stroke-width="1.1"/>
<line x1="944.44" y1="381.64" x2="945.31" y2="380.54" stroke="#8a5c28" stroke-width="1.1"/>
<line x1="947.96" y1="385.14" x2="949.06" y2="384.26" stroke="#8a5c28" stroke-width="1.1"/>
<line x1="949.10" y1="390.08" x2="952.65" y2="388.35" stroke="#8a5c28" stroke-width="1.3"/>
<line x1="952.29" y1="394.01" x2="953.66" y2="393.69" stroke="#8a5c28" stroke-width="1.1"/>
<line x1="952.88" y1="398.94" x2="954.29" y2="398.93" stroke="#8a5c28" stroke-width="1.1"/>
<line x1="952.36" y1="403.88" x2="953.74" y2="404.19" stroke="#8a5c28" stroke-width="1.1"/>
<line x1="950.76" y1="408.59" x2="952.03" y2="409.19" stroke="#8a5c28" stroke-width="1.1"/>
<line x1="946.82" y1="411.77" x2="949.93" y2="414.20" stroke="#8a5c28" stroke-width="1.3"/>
<line x1="939.7" y1="392.1" x2="912.4" y2="414.4" stroke="#3c2814" stroke-width="2" stroke-linecap="round"/>
<circle cx="930.6" cy="399.1" r="4.2" fill="url(#gHub)" stroke="#d89a18" stroke-width="0.5"/>
<rect x="925" y="415" width="3" height="1.2" fill="#8c6a3e"/>
<g transform="translate(551,0) scale(1.04,1)"><text x="0" y="335" font-size="10.5" fill="#8a1a2e" font-weight="normal" font-style="italic" text-anchor="start" textLength="75.00" lengthAdjust="spacing" >Last 12 Months</text></g>
<g transform="translate(652,0) scale(1.04,1)"><text x="0" y="335" font-size="10.5" fill="#8a1a2e" font-weight="normal" font-style="italic" text-anchor="start" textLength="76.92" lengthAdjust="spacing" >Prior 12 Months</text></g>
<g transform="translate(789,0) scale(1.04,1)"><text x="0" y="335" font-size="10.5" fill="#8a1a2e" font-weight="normal" font-style="italic" text-anchor="start" textLength="74.04" lengthAdjust="spacing" >Last 12 Months</text></g>
<g transform="translate(894,0) scale(1.04,1)"><text x="0" y="335" font-size="10.5" fill="#8a1a2e" font-weight="normal" font-style="italic" text-anchor="start" textLength="75.96" lengthAdjust="spacing" >Prior 12 Months</text></g>
<g transform="translate(551,0) scale(1.04,1)"><text x="0" y="441.5" font-size="10.5" fill="#8a1a2e" font-weight="normal" font-style="italic" text-anchor="start" textLength="75.00" lengthAdjust="spacing" >Last 12 Months</text></g>
<g transform="translate(648,0) scale(1.04,1)"><text x="0" y="441.5" font-size="10.5" fill="#8a1a2e" font-weight="normal" font-style="italic" text-anchor="start" textLength="75.96" lengthAdjust="spacing" >Prior 12 Months</text></g>
<g transform="translate(793,0) scale(1.04,1)"><text x="0" y="441" font-size="10.5" fill="#8a1a2e" font-weight="normal" font-style="italic" text-anchor="start" textLength="75.00" lengthAdjust="spacing" >Last 12 Months</text></g>
<g transform="translate(891,0) scale(1.04,1)"><text x="0" y="441" font-size="10.5" fill="#8a1a2e" font-weight="normal" font-style="italic" text-anchor="start" textLength="75.96" lengthAdjust="spacing" >Prior 12 Months</text></g>
<g transform="translate(159,0) scale(1.04,1)"><text x="0" y="503.9" font-size="13" fill="#8c1024" font-weight="normal" font-style="normal" text-anchor="start" textLength="191.63" lengthAdjust="spacing" >Net Billings vs Net Collections</text></g>
<g transform="translate(195.4,0) scale(1.04,1)"><text x="0" y="517" font-size="12" fill="#4a0f4a" font-weight="normal" font-style="normal" text-anchor="start" textLength="120.00" lengthAdjust="spacing" >Functional Currency</text></g>
<g transform="translate(208.3,0) scale(1.04,1)"><text x="0" y="529.2" font-size="12" fill="#4a0f4a" font-weight="normal" font-style="normal" text-anchor="start" textLength="97.60" lengthAdjust="spacing" >As of 4/18/2010</text></g>
<rect x="131" y="537" width="1" height="135" fill="#dfe0b4"/>
<rect x="138" y="537" width="1" height="135" fill="#dfe0b4"/>
<rect x="146" y="537" width="1" height="135" fill="#dfe0b4"/>
<rect x="160" y="537" width="1" height="135" fill="#dfe0b4"/>
<rect x="168" y="537" width="1" height="135" fill="#dfe0b4"/>
<rect x="175" y="537" width="1" height="135" fill="#dfe0b4"/>
<rect x="189" y="537" width="1" height="135" fill="#dfe0b4"/>
<rect x="196" y="537" width="1" height="135" fill="#dfe0b4"/>
<rect x="204" y="537" width="1" height="135" fill="#dfe0b4"/>
<rect x="218" y="537" width="1" height="135" fill="#dfe0b4"/>
<rect x="226" y="537" width="1" height="135" fill="#dfe0b4"/>
<rect x="233" y="537" width="1" height="135" fill="#dfe0b4"/>
<rect x="248" y="537" width="1" height="135" fill="#dfe0b4"/>
<rect x="255" y="537" width="1" height="135" fill="#dfe0b4"/>
<rect x="262" y="537" width="1" height="135" fill="#dfe0b4"/>
<rect x="277" y="537" width="1" height="135" fill="#dfe0b4"/>
<rect x="284" y="537" width="1" height="135" fill="#dfe0b4"/>
<rect x="292" y="537" width="1" height="135" fill="#dfe0b4"/>
<rect x="306" y="537" width="1" height="135" fill="#dfe0b4"/>
<rect x="314" y="537" width="1" height="135" fill="#dfe0b4"/>
<rect x="321" y="537" width="1" height="135" fill="#dfe0b4"/>
<rect x="335" y="537" width="1" height="135" fill="#dfe0b4"/>
<rect x="342" y="537" width="1" height="135" fill="#dfe0b4"/>
<rect x="350" y="537" width="1" height="135" fill="#dfe0b4"/>
<rect x="153" y="537" width="1" height="135" fill="#eb9530"/>
<rect x="182" y="537" width="1" height="135" fill="#eb9530"/>
<rect x="211" y="537" width="1" height="135" fill="#eb9530"/>
<rect x="240" y="537" width="1" height="135" fill="#eb9530"/>
<rect x="270" y="537" width="1" height="135" fill="#eb9530"/>
<rect x="299" y="537" width="1" height="135" fill="#eb9530"/>
<rect x="328" y="537" width="1" height="135" fill="#eb9530"/>
<rect x="357" y="537" width="1" height="135" fill="#eb9530"/>
<rect x="124" y="537" width="1.3" height="135" fill="#7a4a14"/>
<rect x="124" y="671" width="234" height="1.3" fill="#7a4a14"/>
<rect x="124" y="671" width="1" height="4" fill="#7a4a14"/>
<rect x="153" y="671" width="1" height="4" fill="#7a4a14"/>
<rect x="182" y="671" width="1" height="4" fill="#7a4a14"/>
<rect x="211" y="671" width="1" height="4" fill="#7a4a14"/>
<rect x="240" y="671" width="1" height="4" fill="#7a4a14"/>
<rect x="270" y="671" width="1" height="4" fill="#7a4a14"/>
<rect x="299" y="671" width="1" height="4" fill="#7a4a14"/>
<rect x="328" y="671" width="1" height="4" fill="#7a4a14"/>
<rect x="357" y="671" width="1" height="4" fill="#7a4a14"/>
<rect x="124.5" y="567.5" width="11" height="15" fill="url(#gBarB)" fill-opacity="0.95" stroke="#5e4a38" stroke-width="1"/>
<rect x="124.5" y="584.5" width="32" height="15" fill="url(#gBarC)" fill-opacity="0.95" stroke="#5e4a38" stroke-width="1"/>
<rect x="124.5" y="612.5" width="231" height="15" fill="url(#gBarB)" fill-opacity="0.95" stroke="#5e4a38" stroke-width="1"/>
<rect x="124.5" y="629.5" width="138" height="15" fill="url(#gBarC)" fill-opacity="0.95" stroke="#5e4a38" stroke-width="1"/>
<g transform="translate(37,0) scale(1.04,1)"><text x="0" y="586" font-size="10" fill="#4c1e4c" font-weight="normal" font-style="normal" text-anchor="start" textLength="80.58" lengthAdjust="spacing" >Prior 12 Months</text></g>
<g transform="translate(41,0) scale(1.04,1)"><text x="0" y="630.8" font-size="10" fill="#4c1e4c" font-weight="normal" font-style="normal" text-anchor="start" textLength="76.73" lengthAdjust="spacing" >Last 12 Months</text></g>
<rect x="124" y="686" width="1" height="3" fill="#8a7a8a"/>
<text x="157.0" y="678.5" font-size="9.6" fill="#4c1e4c" text-anchor="end" letter-spacing="1" transform="rotate(-90 157.0 678.5)">5K</text>
<text x="186.0" y="678.5" font-size="9.6" fill="#4c1e4c" text-anchor="end" letter-spacing="1" transform="rotate(-90 186.0 678.5)">10K</text>
<text x="215.0" y="678.5" font-size="9.6" fill="#4c1e4c" text-anchor="end" letter-spacing="1" transform="rotate(-90 215.0 678.5)">15.5K</text>
<text x="244.0" y="678.5" font-size="9.6" fill="#4c1e4c" text-anchor="end" letter-spacing="1" transform="rotate(-90 244.0 678.5)">20K</text>
<text x="274.0" y="678.5" font-size="9.6" fill="#4c1e4c" text-anchor="end" letter-spacing="1" transform="rotate(-90 274.0 678.5)">25.5K</text>
<text x="303.0" y="678.5" font-size="9.6" fill="#4c1e4c" text-anchor="end" letter-spacing="1" transform="rotate(-90 303.0 678.5)">30K</text>
<text x="332.0" y="678.5" font-size="9.6" fill="#4c1e4c" text-anchor="end" letter-spacing="1" transform="rotate(-90 332.0 678.5)">35.5K</text>
<text x="361.0" y="678.5" font-size="9.6" fill="#4c1e4c" text-anchor="end" letter-spacing="1" transform="rotate(-90 361.0 678.5)">40K</text>
<rect x="380.5" y="602.5" width="8" height="7.5" fill="url(#gBarB)" stroke="#6a5440" stroke-width="1"/>
<rect x="380.5" y="614.5" width="8" height="7.5" fill="url(#gBarC)" stroke="#6a5440" stroke-width="1"/>
<g transform="translate(395.4,0) scale(1.04,1)"><text x="0" y="610.3" font-size="11" fill="#4a0f4a" font-weight="normal" font-style="normal" text-anchor="start" textLength="58.27" lengthAdjust="spacing" >Net Billings</text></g>
<g transform="translate(395.4,0) scale(1.04,1)"><text x="0" y="622.5" font-size="11" fill="#4a0f4a" font-weight="normal" font-style="normal" text-anchor="start" textLength="79.23" lengthAdjust="spacing" >Net Collections</text></g>
<rect x="385.8" y="644.0" width="60.39999999999998" height="16.299999999999955" rx="2.5" fill="url(#gFormula)" stroke="#a6a6a6" stroke-width="1"/>
<text x="416.8" y="655.8" font-size="8.4" font-weight="bold" font-style="italic" fill="#828282" text-anchor="middle" textLength="45.4" lengthAdjust="spacingAndGlyphs">Formula</text>
<g transform="translate(656.2,0) scale(1.04,1)"><text x="0" y="506.2" font-size="13" fill="#8c1024" font-weight="normal" font-style="normal" text-anchor="start" textLength="197.69" lengthAdjust="spacing" >Accounts Receivable Balance</text></g>
<g transform="translate(674.2,0) scale(1.04,1)"><text x="0" y="518.9" font-size="11.5" fill="#4a0f4a" font-weight="normal" font-style="normal" text-anchor="start" textLength="162.12" lengthAdjust="spacing" >As of End of Fiscal Periods</text></g>
<rect x="579.5" y="547" width="399.1" height="1" fill="#dde0bc"/>
<rect x="579.5" y="554" width="399.1" height="1" fill="#dde0bc"/>
<rect x="579.5" y="570" width="399.1" height="1" fill="#dde0bc"/>
<rect x="579.5" y="578" width="399.1" height="1" fill="#dde0bc"/>
<rect x="579.5" y="594" width="399.1" height="1" fill="#dde0bc"/>
<rect x="579.5" y="602" width="399.1" height="1" fill="#dde0bc"/>
<rect x="579.5" y="618" width="399.1" height="1" fill="#dde0bc"/>
<rect x="579.5" y="625" width="399.1" height="1" fill="#dde0bc"/>
<rect x="579.5" y="641" width="399.1" height="1" fill="#dde0bc"/>
<rect x="579.5" y="649" width="399.1" height="1" fill="#dde0bc"/>
<rect x="579.5" y="665" width="399.1" height="1" fill="#dde0bc"/>
<rect x="579.5" y="673" width="399.1" height="1" fill="#dde0bc"/>
<rect x="579.5" y="539" width="399.1" height="1" fill="#eb9530"/>
<rect x="579.5" y="562" width="399.1" height="1" fill="#eb9530"/>
<rect x="579.5" y="586" width="399.1" height="1" fill="#eb9530"/>
<rect x="579.5" y="610" width="399.1" height="1" fill="#eb9530"/>
<rect x="579.5" y="633" width="399.1" height="1" fill="#eb9530"/>
<rect x="579.5" y="657" width="399.1" height="1" fill="#eb9530"/>
<rect x="579" y="681" width="399.6" height="1.5" fill="#7a4a14"/>
<rect x="579" y="539" width="1.5" height="143" fill="#7a4a14"/>
<text x="572.5" y="543.5" font-size="10" fill="#4c1e4c" text-anchor="end" letter-spacing="0.7">20K</text>
<text x="572.5" y="567.2" font-size="10" fill="#4c1e4c" text-anchor="end" letter-spacing="0.7">15.5K</text>
<text x="572.5" y="590.9" font-size="10" fill="#4c1e4c" text-anchor="end" letter-spacing="0.7">10K</text>
<text x="572.5" y="614.5" font-size="10" fill="#4c1e4c" text-anchor="end" letter-spacing="0.7">5K</text>
<rect x="561" y="634.4" width="3" height="1" fill="#4c1e4c"/>
<text x="574.7" y="661.9" font-size="10" fill="#4c1e4c" text-anchor="end" letter-spacing="0.7">(5K)</text>
<text x="574.7" y="685.6" font-size="10" fill="#4c1e4c" text-anchor="end" letter-spacing="0.7">(10K)</text>
<text x="609" y="693" font-size="10" fill="#4c1e4c" text-anchor="middle" letter-spacing="0.5">1</text>
<text x="640" y="693" font-size="10" fill="#4c1e4c" text-anchor="middle" letter-spacing="0.5">2</text>
<text x="670.8" y="693" font-size="10" fill="#4c1e4c" text-anchor="middle" letter-spacing="0.5">3</text>
<text x="701.6" y="693" font-size="10" fill="#4c1e4c" text-anchor="middle" letter-spacing="0.5">4</text>
<text x="732" y="693" font-size="10" fill="#4c1e4c" text-anchor="middle" letter-spacing="0.5">5</text>
<text x="762.9" y="693" font-size="10" fill="#4c1e4c" text-anchor="middle" letter-spacing="0.5">6</text>
<text x="793.6" y="693" font-size="10" fill="#4c1e4c" text-anchor="middle" letter-spacing="0.5">7</text>
<text x="824.3" y="693" font-size="10" fill="#4c1e4c" text-anchor="middle" letter-spacing="0.5">8</text>
<text x="855" y="693" font-size="10" fill="#4c1e4c" text-anchor="middle" letter-spacing="0.5">9</text>
<text x="886" y="693" font-size="10" fill="#4c1e4c" text-anchor="middle" letter-spacing="0.5">10</text>
<text x="916.6" y="693" font-size="10" fill="#4c1e4c" text-anchor="middle" letter-spacing="0.5">11</text>
<text x="947" y="693" font-size="10" fill="#4c1e4c" text-anchor="middle" letter-spacing="0.5">12</text>
<polyline points="609,632.1 640,651 670.8,651 701.6,651 732,638.7 762.9,646.6 793.6,646.5 824.3,633.5 855,601.3 886,594.7 916.6,594.7 947,581.2" fill="none" stroke="#edc04a" stroke-width="1.1"/>
<polyline points="609,569 640,559.7 670.8,557.1 701.6,559.7" fill="none" stroke="#e0683a" stroke-width="1.1"/>
<circle cx="609" cy="632.1" r="4.2" fill="#e8b430" stroke="#c89a30" stroke-width="0.8"/>
<circle cx="609" cy="632.1" r="1.3" fill="#ffffff"/>
<circle cx="640" cy="651" r="4.2" fill="#e8b430" stroke="#c89a30" stroke-width="0.8"/>
<circle cx="640" cy="651" r="1.3" fill="#ffffff"/>
<circle cx="670.8" cy="651" r="4.2" fill="#e8b430" stroke="#c89a30" stroke-width="0.8"/>
<circle cx="670.8" cy="651" r="1.3" fill="#ffffff"/>
<circle cx="701.6" cy="651" r="4.2" fill="#e8b430" stroke="#c89a30" stroke-width="0.8"/>
<circle cx="701.6" cy="651" r="1.3" fill="#ffffff"/>
<circle cx="732" cy="638.7" r="4.2" fill="#e8b430" stroke="#c89a30" stroke-width="0.8"/>
<circle cx="732" cy="638.7" r="1.3" fill="#ffffff"/>
<circle cx="762.9" cy="646.6" r="4.2" fill="#e8b430" stroke="#c89a30" stroke-width="0.8"/>
<circle cx="762.9" cy="646.6" r="1.3" fill="#ffffff"/>
<circle cx="793.6" cy="646.5" r="4.2" fill="#e8b430" stroke="#c89a30" stroke-width="0.8"/>
<circle cx="793.6" cy="646.5" r="1.3" fill="#ffffff"/>
<circle cx="824.3" cy="633.5" r="4.2" fill="#e8b430" stroke="#c89a30" stroke-width="0.8"/>
<circle cx="824.3" cy="633.5" r="1.3" fill="#ffffff"/>
<circle cx="855" cy="601.3" r="4.2" fill="#e8b430" stroke="#c89a30" stroke-width="0.8"/>
<circle cx="855" cy="601.3" r="1.3" fill="#ffffff"/>
<circle cx="886" cy="594.7" r="4.2" fill="#e8b430" stroke="#c89a30" stroke-width="0.8"/>
<circle cx="886" cy="594.7" r="1.3" fill="#ffffff"/>
<circle cx="916.6" cy="594.7" r="4.2" fill="#e8b430" stroke="#c89a30" stroke-width="0.8"/>
<circle cx="916.6" cy="594.7" r="1.3" fill="#ffffff"/>
<circle cx="947" cy="581.2" r="4.2" fill="#e8b430" stroke="#c89a30" stroke-width="0.8"/>
<circle cx="947" cy="581.2" r="1.3" fill="#ffffff"/>
<circle cx="609" cy="569" r="3.6" fill="#ffffff" stroke="#d45a2c" stroke-width="2.4"/>
<circle cx="640" cy="559.7" r="3.6" fill="#ffffff" stroke="#d45a2c" stroke-width="2.4"/>
<circle cx="670.8" cy="557.1" r="3.6" fill="#ffffff" stroke="#d45a2c" stroke-width="2.4"/>
<circle cx="701.6" cy="559.7" r="3.6" fill="#ffffff" stroke="#d45a2c" stroke-width="2.4"/>
<circle cx="657.8" cy="717.7" r="3" fill="#fff4ee" stroke="#d8603a" stroke-width="2"/>
<circle cx="771.7" cy="717.7" r="3" fill="#fff6d8" stroke="#e2aa28" stroke-width="2"/>
<g transform="translate(664.3,0) scale(1.04,1)"><text x="0" y="721.2" font-size="10" fill="#4c1e4c" font-weight="normal" font-style="normal" text-anchor="start" textLength="93.94" lengthAdjust="spacing" >Current 12 Periods</text></g>
<g transform="translate(778,0) scale(1.04,1)"><text x="0" y="721.2" font-size="10" fill="#4c1e4c" font-weight="normal" font-style="normal" text-anchor="start" textLength="80.96" lengthAdjust="spacing" >Prior 12 Periods</text></g>
</svg>
</body></html>
